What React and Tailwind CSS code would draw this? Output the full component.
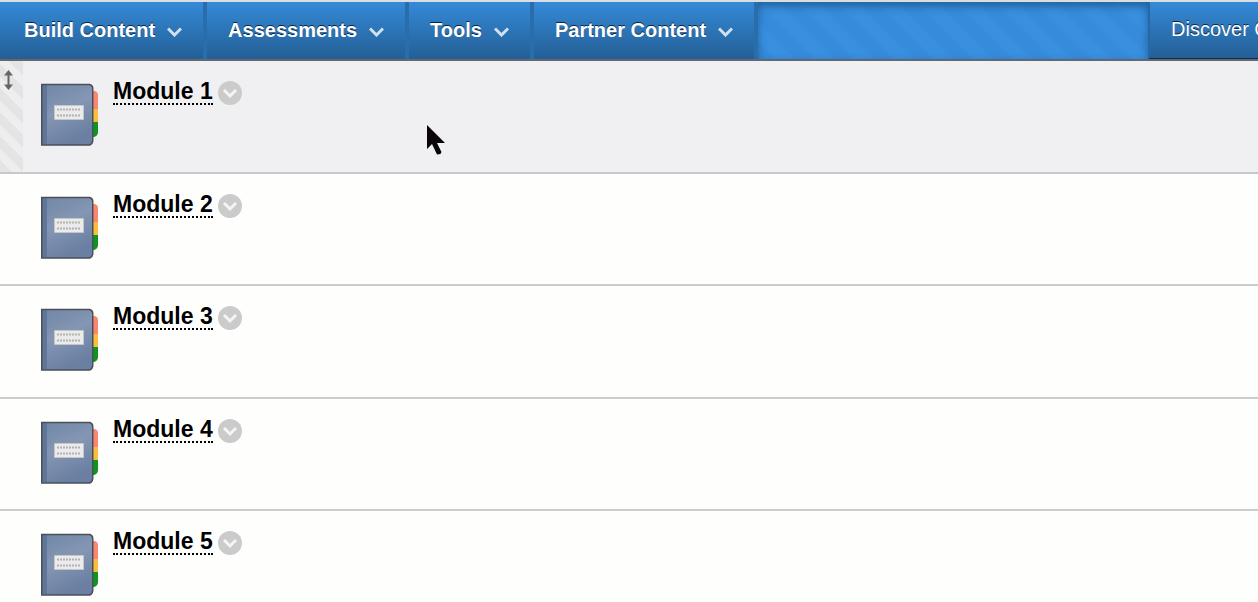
import React from 'react';

const menus = ['Build Content', 'Assessments', 'Tools', 'Partner Content'];

const modules = ['Module 1', 'Module 2', 'Module 3', 'Module 4', 'Module 5'];

function Chevron() {
  return (
    <svg width="15" height="10" viewBox="0 0 15 10" fill="none" aria-hidden="true" className="mt-1">
      <path d="M1 1.500 7.500 8l6.500-6.500" stroke="#d3e0ee" strokeWidth="3" />
    </svg>
  );
}

function NotebookIcon() {
  return (
    <svg width="60" height="64" viewBox="0 0 60 64" aria-hidden="true" className="shrink-0">
      <defs>
        <linearGradient id="cover" x1="0" y1="0" x2="0.4" y2="1">
          <stop offset="0" stopColor="#7087a6" />
          <stop offset="0.5" stopColor="#8496b3" />
          <stop offset="1" stopColor="#6a7fa2" />
        </linearGradient>
      </defs>
      <path d="M52 8h3q3 1 3 4v14h-6z" fill="#fb8570" />
      <path d="M52 26h6v13h-6z" fill="#fdbd3c" />
      <path d="M52 39h6v10q0 4-4 5h-2z" fill="#0f9424" />
      <path d="M2 1.500h48q3 1 3 4v52q0 3-3 4.500H2z" fill="url(#cover)" />
      <path d="M2 2h5v59H2z" fill="#5f7698" />
      <path d="M1.750 1.500h48q3 1 3 4v52q0 3-3 4.500h-48z" fill="none" stroke="#4a4f5a" strokeWidth="1.500" />
      <path d="M14.500 22.500h29v14h-29z" fill="#ebebeb" stroke="#c4c6ca" />
      <path d="M17 26.500h24M17 32.500h24" stroke="#b2b2b4" strokeWidth="2" strokeDasharray="2 1" />
    </svg>
  );
}

function DragHandle() {
  return (
    <button
      type="button"
      aria-label="Reorder"
      className="flex w-[23px] shrink-0 items-start bg-[repeating-linear-gradient(45deg,#e4e4e4_0px,#e4e4e4_8px,#eeeeee_9px,#eeeeee_16px,#e4e4e4_17px)] pt-[9px] pl-1"
    >
      <svg width="9" height="20" viewBox="0 0 9 20" aria-hidden="true">
        <path d="M4.500 0 9 5.500H5.500v9H9L4.500 20 0 14.500h3.500v-9H0z" fill="#666" />
      </svg>
    </button>
  );
}

function ModuleRow({ title, active }) {
  return (
    <li
      className={`flex border-b-2 odd:h-[113px] even:h-[112px] ${
        active ? 'border-[#c8c8cb] bg-[#f0f0f3]' : 'border-[#cccccc] bg-[#fefefd]'
      }`}
    >
      {active ? <DragHandle /> : <div className="w-[23px] shrink-0" />}
      <div className="flex items-start pt-[22px] pl-[17px]">
        <NotebookIcon />
        <div className="-mt-1 ml-[13px] flex items-start gap-[5px]">
          <a
            href="#"
            className="border-b-2 border-dotted border-black text-[23px] leading-6 font-bold text-black"
          >
            {title}
          </a>
          <button type="button" aria-label={`${title} options`} className="mt-[2px]">
            <svg width="24" height="24" viewBox="0 0 24 24" fill="none" aria-hidden="true">
              <circle cx="12" cy="12" r="12" fill="#cbcbcb" />
              <path d="m6 9 6 6 6-6" stroke="#f5f5f5" strokeWidth="3" />
            </svg>
          </button>
        </div>
      </div>
    </li>
  );
}

function Pointer() {
  return (
    <svg
      width="20"
      height="32"
      viewBox="0 0 20 32"
      aria-hidden="true"
      className="pointer-events-none absolute top-[125px] left-[426px]"
    >
      <path d="M1 0v24l5-5 5 10.500 3.500-.5 1-2L11 18h8z" fill="#0a0506" />
    </svg>
  );
}

export default function App() {
  return (
    <div className="relative h-screen overflow-hidden bg-[#fefefd] font-['Liberation_Sans',Arial,sans-serif]">
      <nav className="flex h-[61px] border-t-2 border-b-2 border-t-[#dadde2] border-b-[#62686f] text-[20px] text-white">
        {menus.map((label) => (
          <button
            key={label}
            type="button"
            className="flex shrink-0 items-center gap-3 border-r-4 border-[#2a6dab] bg-linear-to-b from-[#348ad8] to-[#245f96] px-[21px] pb-[2px] font-bold whitespace-nowrap text-shadow-[0_-1px_0_#0a2440] first:pl-6"
          >
            {label}
            <Chevron />
          </button>
        ))}
        <div className="flex-1 bg-[repeating-linear-gradient(45deg,#368bdb_0px,#368bdb_10px,#3990df_14px,#3990df_24px,#368bdb_28px)] shadow-[inset_0_4px_8px_#1f619b]" />
        <div className="w-[110px] shrink-0 overflow-hidden">
          <button
            type="button"
            className="h-full border-b border-l-2 border-b-[#0d2c4c] border-l-[#2568a4] bg-linear-to-b from-[#348ad8] to-[#245f96] px-[21px] pb-[2px] whitespace-nowrap text-shadow-[0_-1px_0_#0a2440]"
          >
            Discover Content
          </button>
        </div>
      </nav>
      <ul>
        {modules.map((title, i) => (
          <ModuleRow key={title} title={title} active={i === 0} />
        ))}
      </ul>
      <Pointer />
    </div>
  );
}
